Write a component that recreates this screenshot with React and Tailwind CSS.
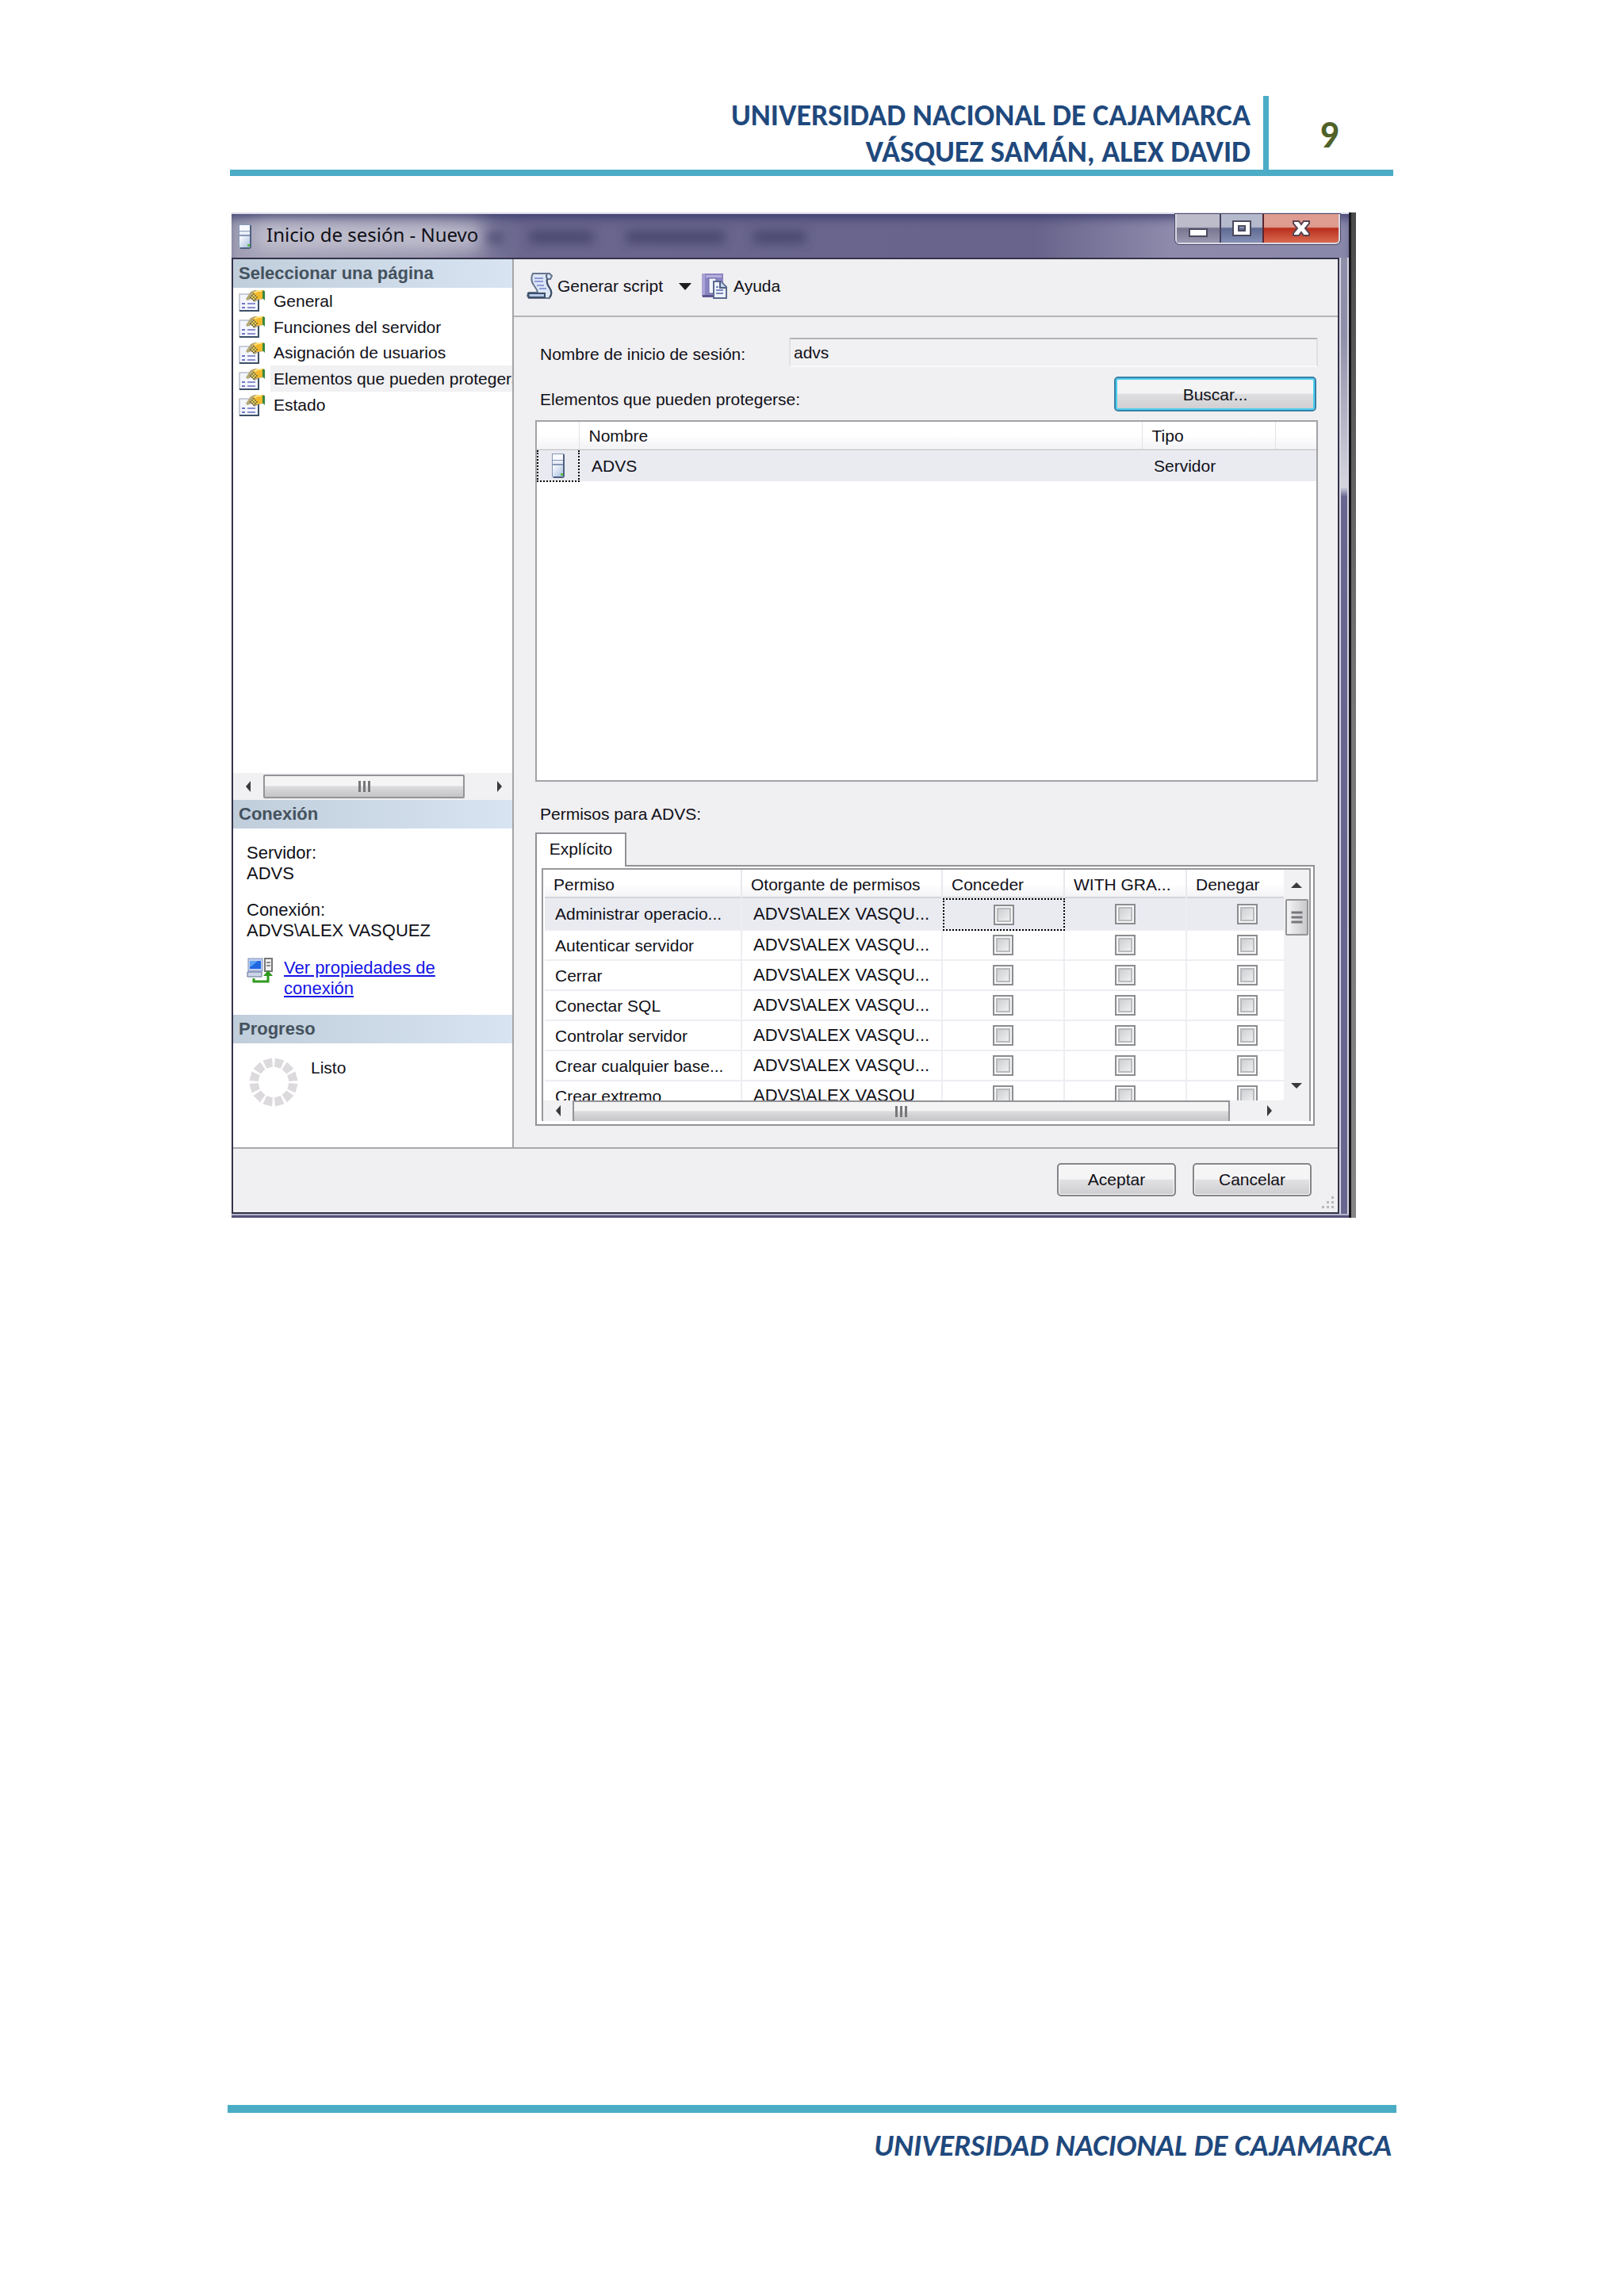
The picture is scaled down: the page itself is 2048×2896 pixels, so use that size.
import React from "react";

const pages = [
  "General",
  "Funciones del servidor",
  "Asignación de usuarios",
  "Elementos que pueden protegerse",
  "Estado",
];
const selectedPage = 3;

const permissions = [
  "Administrar operacio...",
  "Autenticar servidor",
  "Cerrar",
  "Conectar SQL",
  "Controlar servidor",
  "Crear cualquier base...",
  "Crear extremo",
];

function ServerIcon() {
  return (
    <svg width="18" height="32" viewBox="0 0 18 32" aria-hidden="true">
      <defs>
        <linearGradient id="srv" x1="0" y1="0" x2="1" y2="1">
          <stop offset="0" stopColor="#ffffff" />
          <stop offset="1" stopColor="#a9bfe2" />
        </linearGradient>
      </defs>
      <path d="M1 1h15l1 29-2 2H3l-2-2z" fill="#8797b5" />
      <path d="M15 2h2v28l-2 2H3v-2h12z" fill="#50617f" />
      <rect x="2" y="2" width="13" height="7" fill="#f7f9fd" />
      <rect x="2" y="10" width="13" height="4" fill="#e8eef8" />
      <rect x="2" y="16" width="13" height="14" fill="url(#srv)" />
      <rect x="12" y="26" width="3" height="3" fill="#59c046" />
    </svg>
  );
}

function PageIcon() {
  return (
    <svg width="33" height="28" viewBox="0 0 33 28" aria-hidden="true">
      <rect x="1" y="6" width="24" height="21" fill="#f4f6fd" stroke="#98a0b4" />
      <path d="M25 10v17H1" fill="none" stroke="#3d5068" strokeWidth="2" />
      <path d="M4 18h4M4 23h4" stroke="#6d74c4" strokeWidth="2" />
      <path d="M11 18h10M11 23h10" stroke="#8b90cf" strokeWidth="2" />
      <path d="M9 12l6-9 5-2h12v11l-7 1-5 3-4-4-5 2z" fill="#b4a878" />
      <path d="M18 4l5-3h8v10l-7 2-5-3z" fill="#f2b92d" />
      <path d="M20 4l4-2h5" fill="none" stroke="#ffe58a" strokeWidth="2" />
      <path d="M30 2h3v12l-3-3z" fill="#35893c" />
      <path d="M15 9l4-4 4 4-4 5z" fill="#e6cf62" />
      <path d="M18 6h2M16 8h2M20 8h2M18 10h2M16 12h2M20 12h2M22 10h2M14 10h2M18 14h2" stroke="#33301c" strokeWidth="1" />
    </svg>
  );
}

function ScriptIcon() {
  return (
    <svg width="33" height="33" viewBox="0 0 33 33" aria-hidden="true">
      <path
        d="M8 1h21l3 3-2 4h-4c-1 4 0 7 3 11 3 4 3 9 0 13H3l-2-3 2-4h11c0-3-2-5-4-8C6 12 5 7 8 1z"
        fill="#dde6f6"
        stroke="#66768f"
        strokeWidth="2"
      />
      <path d="M26 8c-1 4 0 7 3 11s3 9 0 12" fill="none" stroke="#3b4c64" strokeWidth="2" />
      <path d="M10 7h11M10 11h11M13 16h9M16 20h9" stroke="#8d9bd8" strokeWidth="2" />
      <path d="M2 26h21v5H3z" fill="#b6c9e8" stroke="#3e5068" strokeWidth="2" />
      <path d="M26 2c-2 2-1 5 1 6" fill="none" stroke="#55647c" strokeWidth="2" />
    </svg>
  );
}

function HelpIcon() {
  return (
    <svg width="33" height="33" viewBox="0 0 33 33" aria-hidden="true">
      <path d="M1 1h27v29H1z" fill="#8b84c2" />
      <path d="M1 1h4v29H1z" fill="#a9a3d6" />
      <path d="M6 3h20v3H6z" fill="#b5b0dd" />
      <path d="M10 7h9v19h-9z" fill="#f3f4fd" stroke="#6c66a6" />
      <path d="M2 28h14v3H2z" fill="#5c558f" />
      <path d="M16 11h9l7 7v14H16z" fill="#edf2fc" stroke="#5a6b8e" strokeWidth="2" />
      <path d="M24 11v8h8" fill="#c6d3ec" stroke="#4e5f82" strokeWidth="2" />
      <path d="M19 18h3M19 22h9M19 26h9" stroke="#7787bd" strokeWidth="2" />
    </svg>
  );
}

function ConnectionIcon() {
  return (
    <svg width="33" height="32" viewBox="0 0 33 32" aria-hidden="true">
      <rect x="2" y="1" width="18" height="16" fill="#c3cff0" stroke="#7f8fb9" />
      <rect x="4" y="4" width="14" height="10" fill="#1f66df" />
      <path d="M4 4h10l-8 7H4z" fill="#58a0f5" />
      <path d="M1 18h18v6H1z" fill="#ccd5e8" stroke="#5e6d8f" />
      <rect x="23" y="1" width="9" height="16" fill="#f1f1f1" stroke="#777" strokeWidth="2" />
      <path d="M25 6h5M25 10h5" stroke="#8c8c8c" strokeWidth="2" />
      <path d="M9 26v4h18v-9" fill="none" stroke="#2f9a1e" strokeWidth="3" />
      <path d="M21 23l6-7 6 7z" fill="#2f9a1e" />
    </svg>
  );
}

function ProgressRing() {
  const angles = [15, 45, 75, 105, 135, 165, 195, 225, 255, 285, 315, 345];
  return (
    <svg width="62" height="62" viewBox="0 0 62 62" aria-hidden="true">
      {angles.map((a) => (
        <path key={a} d="M25 1h12l-2 11h-8z" fill="#dcdadd" transform={`rotate(${a} 31 31)`} />
      ))}
    </svg>
  );
}

function Arrow({ d, label, className }) {
  return (
    <button type="button" aria-label={label} className={`flex items-center justify-center ${className}`}>
      <svg width="14" height="14" viewBox="0 0 14 14" aria-hidden="true">
        <path d={d} fill="#3a3a3e" />
      </svg>
    </button>
  );
}
const LEFT = "M10 0v14L4 7z";
const RIGHT = "M4 0v14l6-7z";
const UP = "M0 11h14L7 4z";
const DOWN = "M0 3h14L7 10z";

function Grip() {
  return (
    <span className="flex gap-[3px]">
      <span className="h-[14px] w-[3px] bg-[#77767a]" />
      <span className="h-[14px] w-[3px] bg-[#77767a]" />
      <span className="h-[14px] w-[3px] bg-[#77767a]" />
    </span>
  );
}

function SideHeading({ children }) {
  return (
    <h2 className="flex h-9 shrink-0 items-center bg-linear-to-r from-[#c0cddb] to-[#d8e4f1] pl-[7px] text-[22px] leading-none font-bold text-[#44525e]">
      {children}
    </h2>
  );
}

function Check({ label }) {
  return (
    <input
      type="checkbox"
      aria-label={label}
      className="mx-auto block size-[26px] appearance-none border-2 border-[#8c8d90] bg-linear-to-br from-[#c4c7ca] to-[#f8f8f8] shadow-[inset_0_0_0_2px_#f6f6f6,inset_0_0_0_4px_#b9bbbe]"
    />
  );
}

function Sidebar() {
  return (
    <aside className="flex w-[354px] shrink-0 flex-col border-r-2 border-[#a5a4a8] bg-white">
      <SideHeading>Seleccionar una página</SideHeading>
      <nav className="grid h-[164px] auto-rows-fr overflow-hidden pl-[7px]">
        {pages.map((p, i) => (
          <button type="button" key={p} className="flex min-w-0 items-center gap-[7px] text-left">
            <PageIcon />
            <span
              className={
                i === selectedPage
                  ? "flex h-full flex-1 items-center overflow-hidden bg-[#f1f0f2] pl-1 whitespace-nowrap"
                  : "flex h-full flex-1 items-center overflow-hidden pl-1 whitespace-nowrap"
              }
            >
              {p}
            </span>
          </button>
        ))}
      </nav>
      <div className="mt-auto flex h-[34px] items-center bg-[#f1f0f2]">
        <Arrow d={LEFT} label="Desplazar a la izquierda" className="h-full w-[38px]" />
        <div className="flex h-[30px] w-[254px] items-center justify-center rounded-[2px] border-2 border-[#949397] bg-linear-to-b from-[#f5f4f5] from-45% via-[#dcdbdd] via-50% to-[#c5c4c7]">
          <Grip />
        </div>
        <span className="flex-1" />
        <Arrow d={RIGHT} label="Desplazar a la derecha" className="h-full w-8" />
      </div>
      <SideHeading>Conexión</SideHeading>
      <div className="px-[17px] pt-[18px] pb-5 text-[22px] leading-[26px]">
        <p>Servidor:</p>
        <p>ADVS</p>
        <p className="mt-5">Conexión:</p>
        <p>ADVS\ALEX VASQUEZ</p>
        <div className="mt-[21px] flex items-start gap-[14px]">
          <ConnectionIcon />
          <a href="#propiedades" className="text-[22px] text-[#1414e6] underline">
            Ver propiedades de
            <br />
            conexión
          </a>
        </div>
      </div>
      <SideHeading>Progreso</SideHeading>
      <div className="flex h-[131px] items-start gap-4 pt-[18px] pl-5">
        <ProgressRing />
        <span className="leading-[26px]">Listo</span>
      </div>
    </aside>
  );
}

function SecurablesTable() {
  const th = "border-r border-[#e2e1e5] pl-3 text-left font-normal";
  return (
    <div className="mt-[11px] h-[456px] border-2 border-[#a3a2a7] bg-white">
      <table className="w-full table-fixed border-collapse">
        <colgroup>
          <col className="w-[52px]" />
          <col />
          <col className="w-[168px]" />
          <col className="w-[52px]" />
        </colgroup>
        <thead>
          <tr className="h-[35px] border-b-2 border-[#d2d1d5] bg-linear-to-b from-white from-50% to-[#f3f3f6]">
            <th className={th} aria-label="Icono" />
            <th className={th}>Nombre</th>
            <th className={th}>Tipo</th>
            <th aria-label="Acciones" />
          </tr>
        </thead>
        <tbody>
          <tr className="h-[40px] bg-[#e9ebf1]">
            <td className="border-2 border-dotted border-black">
              <span className="flex justify-center">
                <ServerIcon />
              </span>
            </td>
            <td className="pl-[15px]">ADVS</td>
            <td className="pl-[15px]">Servidor</td>
            <td />
          </tr>
        </tbody>
      </table>
    </div>
  );
}

function PermissionsTable() {
  const th = "border-r-2 border-[#e9e8ee] pl-[11px] text-left font-normal whitespace-nowrap";
  const td = "border-r-2 border-b-2 border-[#eeedf2] p-0";
  return (
    <div className="mr-1 border-2 border-[#929195] bg-white pt-[2px] pr-[3px] pb-1 pl-[6px]">
      <div className="border-2 border-b-0 border-[#98979b]">
        <div className="flex h-[291px]">
          <div className="min-w-0 flex-1 overflow-hidden pl-[2px]">
            <table className="w-[calc(100%+32px)] table-fixed border-separate border-spacing-0">
              <colgroup>
                <col className="w-[249px]" />
                <col className="w-[253px]" />
                <col className="w-[154px]" />
                <col className="w-[154px]" />
                <col />
              </colgroup>
              <thead>
                <tr className="h-[36px] bg-linear-to-b from-white from-50% to-[#f2f2f5] shadow-[inset_0_-2px_0_#d5d4d8]">
                  <th className={th}>Permiso</th>
                  <th className={th}>Otorgante de permisos</th>
                  <th className={th}>Conceder</th>
                  <th className={th}>WITH GRA...</th>
                  <th className={th}>Denegar</th>
                </tr>
              </thead>
              <tbody>
                {permissions.map((p, i) => (
                  <tr key={p} className={i === 0 ? "h-[41px] bg-[#e9ebf1]" : "h-[38px]"}>
                    <td className={`${td} pl-[13px]! whitespace-nowrap`}>{p}</td>
                    <td className={`${td} pl-[14px]! text-[22px] whitespace-nowrap`}>
                      {i === permissions.length - 1 ? "ADVS\\ALEX VASQU" : "ADVS\\ALEX VASQU..."}
                    </td>
                    <td className={i === 0 ? "border-2 border-dotted border-black p-0" : td}>
                      <Check label={`Conceder: ${p}`} />
                    </td>
                    <td className={td}>
                      <Check label={`WITH GRANT: ${p}`} />
                    </td>
                    <td className={td}>
                      <Check label={`Denegar: ${p}`} />
                    </td>
                  </tr>
                ))}
              </tbody>
            </table>
          </div>
          <div className="flex w-8 flex-col items-center bg-[#f1f0f2]">
            <Arrow d={UP} label="Desplazar arriba" className="h-[37px] w-full" />
            <div className="flex h-[46px] w-[29px] items-center justify-center rounded-[2px] border-2 border-[#949397] bg-linear-to-r from-[#f5f4f5] to-[#c9c8cb]">
              <span className="rotate-90">
                <Grip />
              </span>
            </div>
            <span className="flex-1" />
            <Arrow d={DOWN} label="Desplazar abajo" className="h-9 w-full" />
          </div>
        </div>
        <div className="flex h-[26px] items-stretch bg-[#f1f0f2]">
          <Arrow d={LEFT} label="Desplazar a la izquierda" className="w-[37px]" />
          <div className="flex flex-1 items-center justify-center border-2 border-b-0 border-[#949397] bg-linear-to-b from-[#f5f4f5] from-45% via-[#dcdbdd] via-50% to-[#c5c4c7]">
            <Grip />
          </div>
          <Arrow d={RIGHT} label="Desplazar a la derecha" className="w-[100px]" />
        </div>
      </div>
    </div>
  );
}

function TitleBar() {
  return (
    <div className="relative flex h-[57px] items-center border-t-2 border-[#dcdce8] bg-[linear-gradient(to_right,#a09fb4,#8f8da8_18%,#6a668e_26%,#68648c_72%,#8e8aab_84%,#8a88aa)] pl-2 shadow-[inset_0_10px_14px_-6px_#3a3b6c]">
      <svg className="absolute inset-0 h-full w-full" aria-hidden="true">
        <defs>
          <filter id="soft" x="-50%" y="-80%" width="200%" height="260%">
            <feGaussianBlur stdDeviation="7" />
          </filter>
          <filter id="halo" x="-20%" y="-50%" width="140%" height="200%">
            <feGaussianBlur stdDeviation="12" />
          </filter>
        </defs>
        <rect x="30" y="12" width="285" height="34" fill="#cfced9" opacity="0.8" filter="url(#halo)" />
        <g fill="#3b3860" opacity="0.75" filter="url(#soft)">
          <rect x="322" y="24" width="20" height="12" />
          <rect x="376" y="22" width="80" height="14" />
          <rect x="498" y="22" width="124" height="14" />
          <rect x="658" y="22" width="66" height="14" />
        </g>
      </svg>
      <span className="relative flex items-center gap-[18px]">
        <ServerIcon />
        <span className="pb-1 font-['Noto_Sans','Open_Sans',sans-serif] text-[24px]">Inicio de sesión - Nuevo</span>
      </span>
      <div className="relative mr-[11px] ml-auto flex h-[38px] self-start rounded-b-[6px] border-2 border-t-0 border-[#d9d8e4] shadow-[0_0_0_1px_#4c4a66]">
        <button type="button" aria-label="Minimizar" className="flex w-14 items-center justify-center border-r-2 border-[#44425e] bg-linear-to-b from-[#bdbcca] from-45% via-[#77758f] via-50% to-[#9a98b0]">
          <svg width="24" height="26" viewBox="0 0 24 26" aria-hidden="true">
            <rect x="1" y="14" width="22" height="9" fill="#fff" stroke="#4b4a5f" strokeWidth="2" />
          </svg>
        </button>
        <button type="button" aria-label="Maximizar" className="flex w-[54px] items-center justify-center border-r-2 border-[#5a2530] bg-linear-to-b from-[#b5b9cc] from-45% via-[#5f6a92] via-50% to-[#8490b4]">
          <svg width="24" height="22" viewBox="0 0 24 22" aria-hidden="true">
            <path fillRule="evenodd" d="M1 2h22v18H1zM8 8h8v6H8z" fill="#fff" stroke="#4b4a5f" strokeWidth="2" />
          </svg>
        </button>
        <button type="button" aria-label="Cerrar" className="flex w-[94px] items-center justify-center rounded-br-[4px] bg-linear-to-b from-[#df9c90] from-45% via-[#b92b1c] via-50% to-[#d8694e]">
          <svg width="24" height="22" viewBox="0 0 24 22" aria-hidden="true">
            <path d="M2 2h7l3 4 3-4h7v3l-5 6 5 6v3h-7l-3-4-3 4H2v-3l5-6-5-6z" fill="#fff" stroke="#5a4350" strokeWidth="2" />
          </svg>
        </button>
      </div>
    </div>
  );
}

function Dialog() {
  const button =
    "flex h-[42px] w-[150px] items-center justify-center rounded-[5px] border-2 border-[#858488] bg-linear-to-b from-[#f6f5f6] from-48% via-[#e2e1e3] via-50% to-[#cdccd0] shadow-[inset_0_0_0_1px_#fbfbfb]";
  return (
    <section className="mt-[46px] mr-[47px] ml-[2px] flex font-['Liberation_Sans',Arial,sans-serif] text-[21px] leading-none text-[#101018]">
      <div className="min-w-0 flex-1">
        <TitleBar />
        <div className="flex">
          <div className="min-w-0 flex-1 border-2 border-[#34334a] bg-[#f0eff1]">
            <div className="flex border-b-2 border-[#a9a8ac]">
              <Sidebar />
              <main className="flex min-w-0 flex-1 flex-col">
                <div className="flex h-[73px] items-center border-b-2 border-[#b4b3b6] pb-1 pl-4">
                  <button type="button" className="flex items-center gap-[6px]">
                    <ScriptIcon />
                    <span>Generar script</span>
                  </button>
                  <button type="button" aria-label="Más opciones" className="ml-5">
                    <svg width="16" height="10" viewBox="0 0 16 10" aria-hidden="true">
                      <path d="M0 1h16L8 10z" fill="#1c1c1e" />
                    </svg>
                  </button>
                  <button type="button" className="ml-3 flex items-center gap-2">
                    <HelpIcon />
                    <span>Ayuda</span>
                  </button>
                </div>
                <div className="pt-[26px] pr-[25px] pb-[27px] pl-[27px]">
                  <div className="flex items-center">
                    <label htmlFor="login" className="w-[320px] pt-1 pl-[6px]">
                      Nombre de inicio de sesión:
                    </label>
                    <input
                      id="login"
                      readOnly
                      defaultValue="advs"
                      className="h-[37px] min-w-0 flex-1 rounded-[2px] border-2 border-t-[#b3b2b6] border-r-[#e0dfe2] border-b-[#fafafa] border-l-[#e0dfe2] bg-[#f1f0f2] px-1"
                    />
                  </div>
                  <div className="mt-3 flex items-center justify-between">
                    <span className="pt-3 pl-[6px]">Elementos que pueden protegerse:</span>
                    <button
                      type="button"
                      className="mr-[2px] h-[44px] w-[255px] rounded-[5px] border-2 border-[#3a80a8] bg-linear-to-b from-[#f4f4f5] from-48% via-[#dfdee0] via-50% to-[#cfced1] shadow-[inset_0_0_0_2px_#4fd0ee]"
                    >
                      Buscar...
                    </button>
                  </div>
                  <SecurablesTable />
                  <h3 className="mt-6 flex h-8 items-center pl-[6px]">Permisos para ADVS:</h3>
                  <div role="tablist" className="mt-2 flex">
                    <button
                      type="button"
                      role="tab"
                      aria-selected="true"
                      className="relative -mb-[2px] h-[43px] w-[115px] border-2 border-b-0 border-[#929195] bg-white pb-1"
                    >
                      Explícito
                    </button>
                  </div>
                  <PermissionsTable />
                </div>
              </main>
            </div>
            <div className="relative flex h-20 items-center justify-end gap-[21px] pr-[33px] pb-[3px]">
              <button type="button" className={button}>Aceptar</button>
              <button type="button" className={button}>Cancelar</button>
              <svg className="absolute right-1 bottom-1" width="16" height="16" viewBox="0 0 16 16" aria-hidden="true">
                <path d="M12 0h3v3h-3zM12 6h3v3h-3zM6 6h3v3H6zM12 12h3v3h-3zM6 12h3v3H6zM0 12h3v3H0z" fill="#b9b8bc" />
              </svg>
            </div>
          </div>
          <div className="w-3 border-r-2 border-l-2 border-[#d5d4e2] bg-linear-to-b from-[#8f8ea8] from-8% via-[#d5d4de] via-24% to-[#68668f] to-25%" />
        </div>
        <div className="h-[5px] border-t-2 border-[#b5b4ca] bg-[#55527a]" />
      </div>
      <div className="w-[9px] border-l-[3px] border-[#16161c] bg-linear-to-b from-[#4a4a4a] via-[#777777] via-50% to-[#858585]" />
    </section>
  );
}

export default function App() {
  return (
    <div className="flex min-h-screen flex-col bg-white pt-[121px]">
      <div className="mr-[291px] ml-[290px]">
        <header className="flex justify-end border-b-8 border-[#4bacc6] font-[Carlito,Lato,sans-serif] font-bold">
          <div className="border-r-[7px] border-[#4bacc6] pt-[1px] pr-4 text-right text-[38px] leading-[46px] text-[#1f497d]">
            <p>UNIVERSIDAD NACIONAL DE CAJAMARCA</p>
            <p>VÁSQUEZ SAMÁN, ALEX DAVID</p>
          </div>
          <div className="flex w-[157px] items-center pt-1 pl-[64px] text-[48px] leading-none text-[#4f6228]">9</div>
        </header>
        <Dialog />
      </div>
      <footer className="mx-[287px] mt-auto border-t-[10px] border-[#4bacc6] pt-[18px] pr-[6px] pb-[167px] text-right font-[Carlito,Lato,sans-serif] text-[38px] leading-[46px] font-bold text-[#1f497d] italic">
        UNIVERSIDAD NACIONAL DE CAJAMARCA
      </footer>
    </div>
  );
}
